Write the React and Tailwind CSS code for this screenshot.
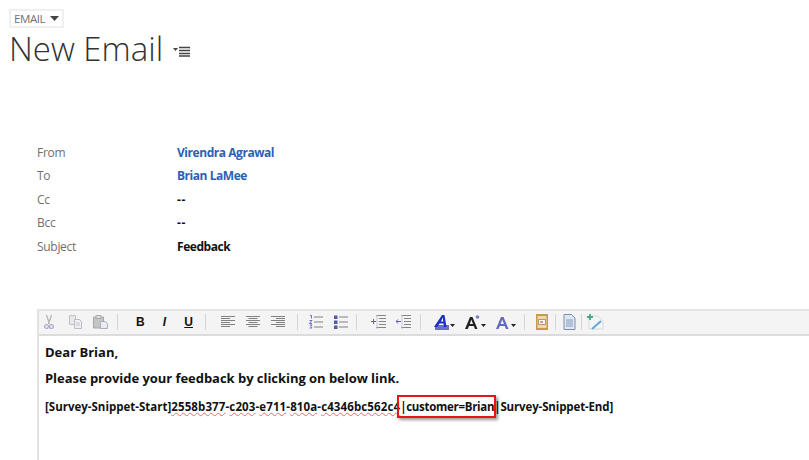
import React from 'react';

const FONT = { fontFamily: '"Open Sans", "Noto Sans", sans-serif' };

const FIELDS = [
  { label: 'From', value: 'Virendra Agrawal', link: true },
  { label: 'To', value: 'Brian LaMee', link: true },
  { label: 'Cc', value: '--', dash: true },
  { label: 'Bcc', value: '--', dash: true },
  { label: 'Subject', value: 'Feedback' },
];

// ── Toolbar icons ────────────────────────────────────────────────────────────
const Icon = ({ children, w = 16, className = '' }) => (
  <svg width={w} height="16" viewBox={`0 0 ${w} 16`} className={`shrink-0 ${className}`}>
    {children}
  </svg>
);

const Caret = () => (
  <svg width="5" height="3" viewBox="0 0 5 3" className="ml-px mt-1.5 shrink-0">
    <path d="M0 0h5L2.5 3z" fill="#222" />
  </svg>
);

const Sep = () => <div className="w-px h-4 bg-[#d4d4d4] shrink-0" />;

const Cut = () => (
  <Icon w={10}>
    <path d="M2.500 1l3 9M7.500 1l-3 9" stroke="#b4b4b8" strokeWidth="1.200" fill="none" />
    <circle cx="2.500" cy="12.500" r="1.900" stroke="#a9acd0" strokeWidth="1.300" fill="none" />
    <circle cx="7.500" cy="12.500" r="1.900" stroke="#a9acd0" strokeWidth="1.300" fill="none" />
  </Icon>
);

const Copy = () => (
  <Icon>
    <path d="M1.500 1.500h6v9h-6z" fill="#e8e8e8" stroke="#c2c2c2" />
    <path d="M6.500 5.500h5l2 2v7h-7z" fill="#eef0f4" stroke="#b8bcc6" />
    <path d="M8 9h4M8 11h4" stroke="#c6c6c6" />
  </Icon>
);

const Paste = () => (
  <Icon w={17}>
    <path d="M1.500 3h10v11h-10z" fill="#c4c4c4" stroke="#a8a8a8" />
    <path d="M4 1.500h5v3H4z" fill="#dedede" stroke="#aaa" />
    <path d="M8.500 7.500h5l2 2v5h-7z" fill="#e8ebf2" stroke="#aab0c0" />
  </Icon>
);

const AlignIcon = ({ kind }) => {
  const rows = [
    [14, 2.5],
    [9, 4.5],
    [14, 6.5],
    [9, 8.5],
    [14, 10.5],
    [9, 12.5],
  ];
  return (
    <Icon w={14}>
      {rows.map(([len, y]) => {
        const x = kind === 'left' ? 0 : kind === 'right' ? 14 - len : (14 - len) / 2;
        return <path key={y} d={`M${x} ${y}h${len}`} stroke="#808080" strokeWidth="1" />;
      })}
    </Icon>
  );
};

const NumberList = () => (
  <Icon w={14}>
    <path d="M1 1.500h1.500v3M.500 6.500h2.500L.500 9.500H3M.500 11h2.500l-1 1.500 1 1.500H.500" stroke="#6a6fc8" strokeWidth="1" fill="none" />
    <path d="M5 3h9M5 8h9M5 13h9" stroke="#808080" strokeWidth="1.200" />
  </Icon>
);

const BulletList = () => (
  <Icon w={14}>
    <path d="M0 1.500h3.500v3.500H0zM0 6.500h3.500V10H0zM0 11.500h3.500V15H0z" fill="#5258ac" />
    <path d="M5 3h9M5 8h9M5 13h9" stroke="#808080" strokeWidth="1.200" />
  </Icon>
);

const Indent = ({ flip }) => (
  <Icon>
    <path d="M5 1.500h10M8 4.500h7M8 7.500h7M8 10.500h7M5 13.500h10" stroke="#858585" strokeWidth="1.200" />
    <path d="M6 1v14" stroke="#c8c8c8" />
    {flip ? (
      <path d="M5 7.500H0M2 5.500l-2 2 2 2" stroke="#5a65b8" fill="none" />
    ) : (
      <path d="M0 7.500h5M2.500 5v5" stroke="#5a65b8" fill="none" />
    )}
  </Icon>
);

const FontIcon = () => (
  <Icon w={15}>
    <path d="M1 11h14v5H1z" fill="#6a70c4" />
    <path d="M0 13L8 1h2.500l2 12h-2.500l-.5-3.500H5.500L3 13zM7 7.500h2.300L8.700 3.500z" fill="#1c2fc4" />
  </Icon>
);

const FontSize = () => (
  <Icon w={15}>
    <path d="M0 15L5 3h2.500l5 12H10l-1.200-3H4l-1.200 3zM4.800 10h3.200L6.300 5.500z" fill="#222" />
    <circle cx="12.500" cy="3" r="1.800" fill="#7a80c8" />
  </Icon>
);

const FontColor = () => (
  <Icon w={15}>
    <path d="M1 15L6 3h2.500l5 12H11l-1.200-3H4.800l-1.200 3zM5.500 10h3.500L7.200 5.500z" fill="#6268bc" />
  </Icon>
);

const Template = () => (
  <Icon w={14}>
    <path d="M1 0h12v16H1z" fill="#c99a45" />
    <path d="M2.500 2h9v12h-9z" fill="#efd9a4" />
    <path d="M3.500 5.500h7v5h-7z" fill="#f6f6f6" stroke="#8a7a60" strokeWidth=".7" />
    <path d="M5 8h3" stroke="#c05a40" strokeWidth="1.200" />
  </Icon>
);

const Doc = () => (
  <Icon w={13}>
    <path d="M1 .5h7.500l3.500 3.500v11.500H1z" fill="#dde6f4" stroke="#7c8cae" />
    <path d="M3 6h7M3 8h7M3 10h7M3 12h7" stroke="#8a9ab8" />
  </Icon>
);

const Snippet = () => (
  <Icon w={18}>
    <path d="M3 2h9l5 5v8H3z" fill="#f4f7f7" stroke="#d5dcdc" />
    <path d="M4 0v6M1 3h6" stroke="#4aa58a" strokeWidth="1.800" />
    <path d="M6 15l9-8" stroke="#62a8d8" strokeWidth="2" />
  </Icon>
);

const Squiggle = ({ children }) => (
  <span className="underline decoration-wavy decoration-[#e86a6a] decoration-1 underline-offset-1">{children}</span>
);

const App = () => (
  <div className="w-[809px] h-[460px] overflow-hidden bg-white flex flex-col" style={FONT}>
    {/* Header */}
    <div className="pl-[9px] pt-[9px]">
      <div className="w-[55px] h-[19px] border-2 border-[#f0f0f0] flex items-center pl-[3px] gap-[5px]">
        <span className="text-[11.500px] text-[#707070] tracking-[-0.4px] leading-none">EMAIL</span>
        <svg width="9" height="5" viewBox="0 0 9 5" className="shrink-0">
          <path d="M0 0h9L4.500 5z" fill="#444" />
        </svg>
      </div>
      <div className="flex items-center h-[40px]">
        <h1 className="text-[33px] font-light text-[#333] leading-none">New Email</h1>
        <svg width="18" height="11" viewBox="0 0 18 11" className="ml-[10px] mt-[7px] shrink-0">
          <path d="M0 2h5L2.500 5z" fill="#444" />
          <path d="M6 1.500h11M6 4.500h11M6 7.500h11M6 10h11" stroke="#444" strokeWidth="1.300" />
        </svg>
      </div>
    </div>

    {/* Fields */}
    <div className="mt-[73px] ml-[37px] flex flex-col">
      {FIELDS.map((f) => (
        <div key={f.label} className="h-[23.500px] flex items-center">
          <span className="w-[140px] text-[12px] text-[#707070] tracking-[-0.3px]">{f.label}</span>
          <span
            className={`text-[12px] font-bold ${f.dash ? 'tracking-[0.6px]' : 'tracking-[-0.45px]'} ${
              f.link ? 'text-[#2a5fb4]' : 'text-[#111]'
            }`}
          >
            {f.value}
          </span>
        </div>
      ))}
    </div>

    {/* Editor */}
    <div className="mt-[50px] ml-[37px] flex-1 border-l-2 border-[#e2e2e2]">
      <div className="h-[27px] bg-[#f4f4f4] border-y-2 border-[#e4e4e4] border-b-[#dcdcdc] flex items-center pl-[5px]">
        <Cut />
        <div className="ml-[14px]"><Copy /></div>
        <div className="ml-[8px]"><Paste /></div>
        <div className="ml-[8px]"><Sep /></div>
        <div className="flex w-[75px] justify-around ml-[9px] text-[12px] font-bold text-[#111]" style={{ fontFamily: '"Liberation Sans", sans-serif' }}>
          <span>B</span>
          <span className="italic">I</span>
          <span className="underline">U</span>
        </div>
        <div className="ml-[3px]"><Sep /></div>
        <div className="flex gap-[11px] ml-[15px]">
          <AlignIcon kind="left" />
          <AlignIcon kind="center" />
          <AlignIcon kind="right" />
        </div>
        <div className="ml-[12px]"><Sep /></div>
        <div className="flex gap-[11px] ml-[11px]">
          <NumberList />
          <BulletList />
        </div>
        <div className="ml-[8px]"><Sep /></div>
        <div className="flex gap-[9px] ml-[14px]">
          <Indent />
          <Indent flip />
        </div>
        <div className="ml-[8px]"><Sep /></div>
        <div className="flex items-center ml-[13px]"><FontIcon /><Caret /></div>
        <div className="flex items-center ml-[10px]"><FontSize /><Caret /></div>
        <div className="flex items-center ml-[9px]"><FontColor /><Caret /></div>
        <div className="ml-[8px]"><Sep /></div>
        <div className="ml-[10px]"><Template /></div>
        <div className="ml-[6px]"><Sep /></div>
        <div className="ml-[7px]"><Doc /></div>
        <div className="ml-[5px]"><Sep /></div>
        <div className="ml-[4px]"><Snippet /></div>
      </div>

      <div className="pl-[6px] pt-[7px] text-[#111] font-bold">
        <p className="text-[13px] leading-[18px]">Dear Brian,</p>
        <p className="text-[13px] leading-[18px] mt-[8px] tracking-[-0.04px]">Please provide your feedback by clicking on below link.</p>
        <p className="text-[11.500px] leading-[16px] mt-[12px] whitespace-nowrap">
          [Survey-Snippet-Start]
          <span className="tracking-[0.12px]">
            <Squiggle>2558b377</Squiggle>-<Squiggle>c203</Squiggle>-<Squiggle>e711</Squiggle>-<Squiggle>810a</Squiggle>-<Squiggle>c4346bc562c4</Squiggle>
          </span>
          <span className="relative tracking-[-0.3px]">
            |customer=Brian
            <span className="absolute -left-[3px] -right-[2px] -top-[4px] -bottom-[4px] border-2 border-[#e8131b] shadow-[2px_2px_3px_rgba(0,0,0,0.4)]" />
          </span>
          <span className="tracking-[-0.13px]">|Survey-Snippet-End]</span>
        </p>
      </div>
    </div>
  </div>
);

export default App;
